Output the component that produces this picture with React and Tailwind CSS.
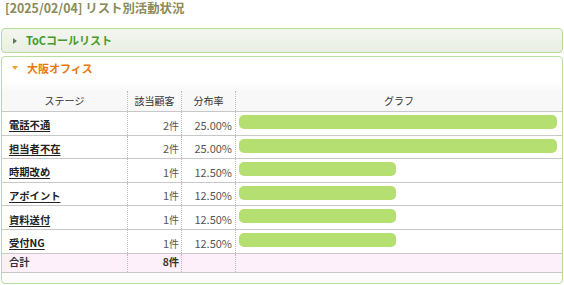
import React from "react";

const rows = [
  { stage: "電話不通", count: "2", rate: "25.00%", pct: 100 },
  { stage: "担当者不在", count: "2", rate: "25.00%", pct: 100 },
  { stage: "時期改め", count: "1", rate: "12.50%", pct: 49.4 },
  { stage: "アポイント", count: "1", rate: "12.50%", pct: 49.4 },
  { stage: "資料送付", count: "1", rate: "12.50%", pct: 49.4 },
  { stage: "受付NG", count: "1", rate: "12.50%", pct: 49.4 },
];

const font = { fontFamily: '"Noto Sans CJK JP", "Noto Sans", sans-serif' };

export default function App() {
  return (
    <div className="w-[564px] h-[285px] bg-white overflow-hidden text-[11px] text-[#333]" style={font}>
      <div className="h-[28px] pl-[5px] pt-[1px] text-[12.4px] leading-[14px] font-bold text-[#8a8a5c]">
        [2025/02/04] リスト別活動状況
      </div>

      <div className="mx-[1px] h-[25px] rounded-[4px] border border-[#b8dda0] bg-gradient-to-b from-[#f3f6ef] to-[#e9efe3] flex items-center">
        <span className="ml-[11px] w-0 h-0 border-y-[3px] border-y-transparent border-l-[4px] border-l-[#5f7a55]"></span>
        <span className="ml-[9px] text-[11px] font-bold text-[#47992c] leading-none">ToCコールリスト</span>
      </div>

      <div className="mx-[1px] mt-[3px] h-[228px] rounded-[4px] border border-[#b8dda0] bg-gradient-to-b from-white to-[#fcfcfc] flex flex-col">
        <div className="h-[22px] flex items-center">
          <span className="ml-[10px] w-0 h-0 border-x-[3.5px] border-x-transparent border-t-[4px] border-t-[#f0a526]"></span>
          <span className="ml-[9px] text-[11px] font-bold text-[#e8780c] leading-none">大阪オフィス</span>
        </div>
        <div className="h-[12px] bg-gradient-to-b from-white to-[#f9f9f9]"></div>

        <div className="grid grid-cols-[126px_54px_54px_1fr] bg-[#f8f8f8] h-[21px] border-b border-[#c8c8c8] leading-none items-stretch text-[10px]">
          <div className="flex items-center justify-center border-r border-dotted border-[#bbbbbb]">ステージ</div>
          <div className="flex items-center justify-center border-r border-dotted border-[#bbbbbb]">該当顧客</div>
          <div className="flex items-center justify-center border-r border-dotted border-[#bbbbbb]">分布率</div>
          <div className="flex items-center justify-center">グラフ</div>
        </div>

        {rows.map((r) => (
          <div key={r.stage} className="grid grid-cols-[126px_54px_54px_1fr] h-[23.6px] border-b border-[#c8c8c8] bg-white leading-none">
            <div className="flex items-end pb-[4px] pl-[7px] border-r border-dotted border-[#bbbbbb]">
              <span className="text-[10.3px] font-bold text-[#222] underline underline-offset-[2px] decoration-[1px]">{r.stage}</span>
            </div>
            <div className="flex items-end justify-end pb-[4px] pr-[2px] text-[#555] border-r border-dotted border-[#bbbbbb]">
              {r.count}<span className="text-[10px]">件</span>
            </div>
            <div className="flex items-end justify-end pb-[4px] pr-[3px] text-[#555] border-r border-dotted border-[#bbbbbb]">{r.rate}</div>
            <div className="flex items-start pt-[3px] pl-[3px] pr-[5px]">
              <div className="w-full h-[14px]">
                <div className="h-[14px] rounded-[5px] bg-[#b6df72]" style={{ width: `${r.pct}%` }}></div>
              </div>
            </div>
          </div>
        ))}

        <div className="grid grid-cols-[126px_54px_54px_1fr] h-[19px] border-b border-[#c8c8c8] bg-[#fdf0fb] leading-none text-[10.3px]">
          <div className="flex items-center pl-[7px] font-bold text-[#333] border-r border-dotted border-[#bbbbbb]">合計</div>
          <div className="flex items-center justify-end pr-[2px] font-bold text-[#333] border-r border-dotted border-[#bbbbbb]">8件</div>
          <div className="border-r border-dotted border-[#bbbbbb]"></div>
          <div></div>
        </div>
      </div>
    </div>
  );
}
